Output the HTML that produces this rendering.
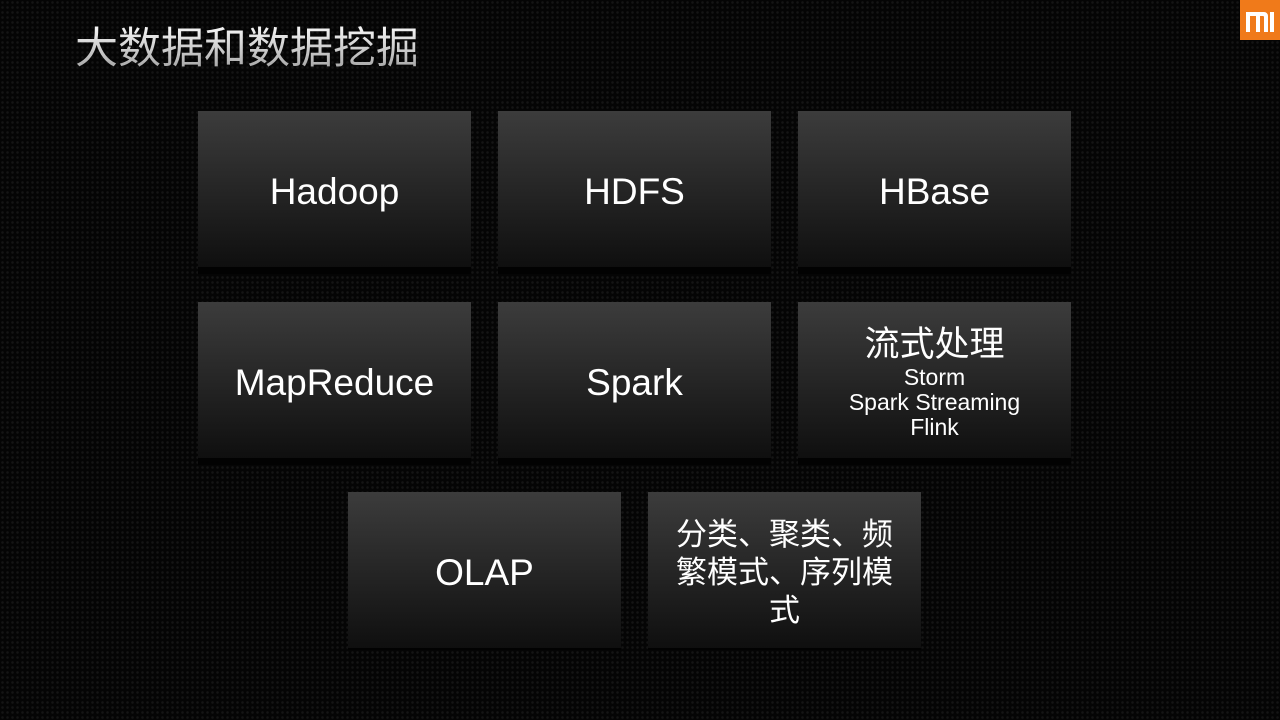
<!DOCTYPE html>
<html><head><meta charset="utf-8"><style>
body{margin:0;width:1280px;height:720px;overflow:hidden;background:#050505;
background-image:radial-gradient(circle,#151515 1px,transparent 1.5px);background-size:5px 5px;
font-family:"Liberation Sans","Noto Sans CJK SC",sans-serif;position:relative;color:#fff}
.t{position:absolute;left:75px;top:22px;font-size:43px;line-height:54px;
background:linear-gradient(#fff,#999);-webkit-background-clip:text;color:transparent}
.logo{position:absolute;left:1240px;top:0;width:40px;height:40px;background:#f07a1a}
.b{position:absolute;width:273px;height:156px;background:linear-gradient(#3c3c3c,#0f0f0f);
box-shadow:0 7px 0 #020202;display:flex;align-items:center;justify-content:center;text-align:center;flex-direction:column}
.big{font-size:37px;padding-top:6px;box-sizing:border-box}
</style></head><body>
<div class="t">大数据和数据挖掘</div>
<div class="logo"><svg width="40" height="40" viewBox="0 0 40 40"><path d="M6 12h18a4 4 0 0 1 4 4v16h-4V17a1 1 0 0 0-1-1H20v16h-4V16h-6v16H6z M30 12h4v20h-4z" fill="#fff"/></svg></div>
<div class="b big" style="left:198px;top:111px">Hadoop</div>
<div class="b big" style="left:498px;top:111px">HDFS</div>
<div class="b big" style="left:798px;top:111px">HBase</div>
<div class="b big" style="left:198px;top:302px">MapReduce</div>
<div class="b big" style="left:498px;top:302px">Spark</div>
<div class="b" style="left:798px;top:302px;padding-top:4px;box-sizing:border-box"><div style="font-size:35px;line-height:40px">流式处理</div><div style="font-size:23px;line-height:25px">Storm<br>Spark Streaming<br>Flink</div></div>
<div class="b big" style="left:348px;top:492px;box-shadow:0 2px 0 #020202">OLAP</div>
<div class="b" style="left:648px;top:492px;box-shadow:0 2px 0 #020202;font-size:31px;line-height:38px;padding:6px 24px 0;box-sizing:border-box">分类、聚类、频繁模式、序列模式</div>
</body></html>
